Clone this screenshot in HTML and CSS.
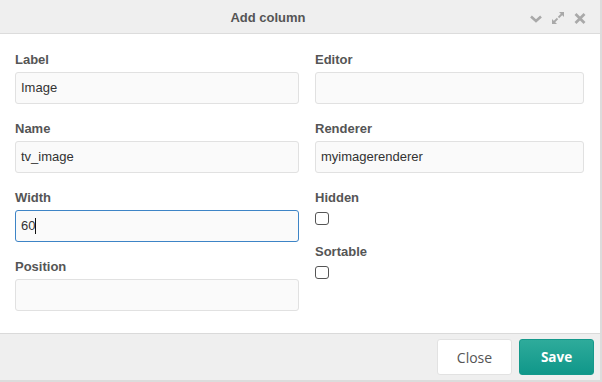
FILE: index.html
```html
<!DOCTYPE html>
<html lang="en">
<head>
<meta charset="utf-8">
<title>Add column</title>
<link rel="stylesheet" href="styles.css">
</head>
<body>
<div class="dialog">
  <div class="header">
    <div class="title">Add column</div>
    <div class="tools">
      <svg class="tool" width="14" height="14" viewBox="0 0 14 14"><polyline points="2,5.5 7,10 12,5.5" fill="none" stroke="#a9a9a9" stroke-width="2.6"/></svg>
      <svg class="tool" width="14" height="14" viewBox="0 0 14 14"><polygon points="8,1 13,1 13,6" fill="#a9a9a9"/><line x1="7.5" y1="6.5" x2="11" y2="3" stroke="#a9a9a9" stroke-width="1.8"/><polygon points="1,8 1,13 6,13" fill="#a9a9a9"/><line x1="3" y1="11" x2="6.5" y2="7.5" stroke="#a9a9a9" stroke-width="1.8"/></svg>
      <svg class="tool" width="14" height="14" viewBox="0 0 14 14"><line x1="2.5" y1="3" x2="11.5" y2="12" stroke="#a9a9a9" stroke-width="2.6"/><line x1="11.5" y1="3" x2="2.5" y2="12" stroke="#a9a9a9" stroke-width="2.6"/></svg>
    </div>
  </div>
  <div class="body">
    <div class="col">
      <div class="group">
        <label class="lbl">Label</label>
        <div class="field">Image</div>
      </div>
      <div class="group">
        <label class="lbl">Name</label>
        <div class="field">tv_image</div>
      </div>
      <div class="group">
        <label class="lbl">Width</label>
        <div class="field focused">60<span class="caret"></span></div>
      </div>
      <div class="group">
        <label class="lbl">Position</label>
        <div class="field"></div>
      </div>
    </div>
    <div class="col">
      <div class="group">
        <label class="lbl">Editor</label>
        <div class="field"></div>
      </div>
      <div class="group">
        <label class="lbl">Renderer</label>
        <div class="field">myimagerenderer</div>
      </div>
      <div class="group check-group">
        <label class="lbl check-lbl">Hidden</label>
        <span class="checkbox"></span>
      </div>
      <div class="group check-group">
        <label class="lbl check-lbl">Sortable</label>
        <span class="checkbox"></span>
      </div>
    </div>
  </div>
  <div class="footer">
    <button class="btn btn-close">Close</button>
    <button class="btn btn-save">Save</button>
  </div>
</div>
</body>
</html>
```
FILE: styles.css
```css
* { box-sizing: border-box; }
html, body { margin: 0; padding: 0; }
body {
  background: #dcdcdc;
  width: 602px;
  height: 382px;
  overflow: hidden;
  font-family: "Liberation Sans", Arial, sans-serif;
}
.dialog {
  width: 600px;
  height: 380px;
  background: #fff;
  display: flex;
  flex-direction: column;
}
.header {
  height: 34px;
  flex: 0 0 34px;
  background: #efefef;
  border-bottom: 1px solid #dcdcdc;
  display: flex;
  align-items: center;
}
.title {
  flex: 1;
  text-align: center;
  font-weight: bold;
  font-size: 13px;
  color: #555;
  padding: 1px 0 0 7px;
}
.tools {
  display: flex;
  align-items: center;
  gap: 8px;
  padding: 2px 13px 0 0;
}
.tool { display: block; }
.body {
  flex: 1;
  display: grid;
  grid-template-columns: 284px 269px;
  column-gap: 16px;
  padding: 18px 16px 0 15px;
  align-content: start;
}
.col { display: flex; flex-direction: column; }
.group { margin-bottom: 17px; }
.lbl {
  display: block;
  font-weight: bold;
  font-size: 13px;
  line-height: 15px;
  color: #555;
  margin-bottom: 5px;
}
.field {
  height: 32px;
  border: 1px solid #e1e1e1;
  border-radius: 3px;
  background: #fafafa;
  padding: 0 5px;
  font-size: 13px;
  line-height: 30px;
  color: #333;
  white-space: nowrap;
}
.field.focused {
  border-color: #3d84c6;
  display: flex;
  align-items: center;
}
.caret {
  display: inline-block;
  width: 1px;
  height: 16px;
  background: #111;
  margin-left: 0;
}
.check-group { margin-bottom: 19px; }
.check-lbl { margin-bottom: 7px; }
.checkbox {
  display: block;
  width: 14px;
  height: 13px;
  border: 1px solid #555;
  border-radius: 3px;
  background: #fff;
}
.footer {
  flex: 0 0 47px;
  height: 47px;
  background: #efefef;
  border-top: 1px solid #dadada;
  display: flex;
  justify-content: flex-end;
  align-items: flex-start;
  gap: 7px;
  padding: 5px 6px 0 0;
}
.btn {
  width: 75px;
  height: 36px;
  border-radius: 3px;
  font-family: "Open Sans", "Liberation Sans", sans-serif;
  font-size: 14px;
  cursor: pointer;
  padding: 0;
}
.btn-close {
  background: #fff;
  border: 1px solid #e2e2e2;
  color: #555;
}
.btn-save {
  background: linear-gradient(#2eab9b, #10978a);
  border: 1px solid #14998b;
  color: #fff;
  font-weight: bold;
  font-size: 13.5px;
}
```
